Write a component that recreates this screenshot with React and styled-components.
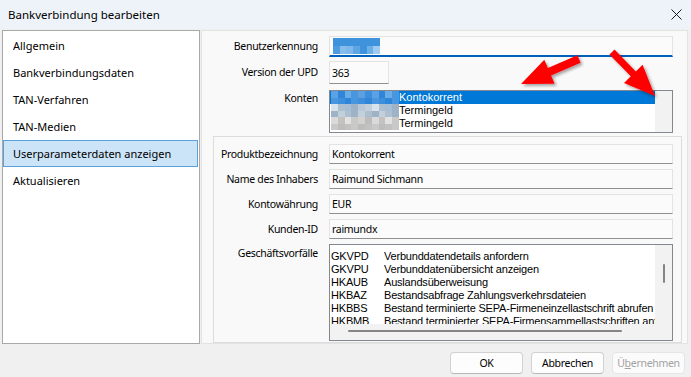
import React from "react";
import styled, { createGlobalStyle } from "styled-components";

const GlobalStyle = createGlobalStyle`
    body {
        margin: 0;
        background: #f0f0f0;
    }
`;

const Window = styled.div`
    width: 691px;
    height: 377px;
    display: flex;
    flex-direction: column;
    position: relative;
    overflow: hidden;
    background: #f0f0f0;
    font-family: "Noto Sans", "Segoe UI", sans-serif;
    font-size: 11px;
    color: #000;
`;

const TitleBar = styled.div`
    height: 29px;
    flex: none;
    display: flex;
    align-items: center;
    justify-content: space-between;
    padding: 0 9px 0 8px;
    background: #eef3f9;
    font-size: 11.5px;
`;

const Body = styled.div`
    height: 315px;
    flex: none;
    display: flex;
    gap: 1px;
    padding: 1px 3px 0 2px;
    box-sizing: border-box;
`;

const Sidebar = styled.div`
    width: 198px;
    box-sizing: border-box;
    background: #fff;
    border: 1px solid #a9a9a9;
    padding-top: 1px;
`;

const NavItem = styled.div`
    height: 27px;
    display: flex;
    align-items: center;
    box-sizing: border-box;
    margin-right: 1px;
    padding-left: 9px;
    background: ${(p) => (p.active ? "#cce4f7" : "transparent")};
    border: 1px solid ${(p) => (p.active ? "#5aa0dc" : "transparent")};
`;

const Panel = styled.div`
    flex: 1;
    box-sizing: border-box;
    background: #f9f9f9;
    border: 1px solid #e3e3e3;
    padding-top: 5px;
    display: flex;
    flex-direction: column;
    font-size: 10.5px;
    letter-spacing: -0.3px;
`;

const Row = styled.div`
    display: flex;
    align-items: ${(p) => (p.top ? "flex-start" : "center")};
    gap: 11px;
    margin-top: ${(p) => p.mt || 0}px;
`;

const Label = styled.div`
    width: ${(p) => p.w}px;
    flex: none;
    text-align: right;
    padding-top: ${(p) => p.pt || 0}px;
    line-height: 15px;
    white-space: nowrap;
`;

const Field = styled.div`
    width: ${(p) => p.w || 344}px;
    height: ${(p) => p.h || 20}px;
    box-sizing: border-box;
    display: flex;
    align-items: center;
    padding-left: 2px;
    background: #fbfbfb;
    border: 1px solid #e3e3e3;
    border-bottom: ${(p) => (p.focus ? "2px solid #005fb8" : "1px solid #8f8f8f")};
    white-space: nowrap;
`;

const Group = styled.div`
    margin: 3px 5px 0 11px;
    height: 208px;
    box-sizing: border-box;
    border: 1px solid #dcdcdc;
    padding-top: 7px;
`;

const ListBox = styled.div`
    width: 344px;
    height: ${(p) => p.h}px;
    box-sizing: border-box;
    border: 1px solid #828790;
    background: #fff;
    display: grid;
    grid-template-columns: 1fr 17px;
    grid-template-rows: ${(p) => (p.hscroll ? "1fr 16px" : "1fr")};
    font-family: "Liberation Sans", Arial, sans-serif;
    font-size: 11px;
    letter-spacing: ${(p) => (p.tight ? "-0.2px" : "0")};
`;

const ListContent = styled.div`
    overflow: hidden;
    padding-top: ${(p) => p.pt || 0}px;
`;

const VScroll = styled.div`
    background: #f2f2f2;
    display: flex;
    justify-content: center;
    align-items: flex-start;
`;

const HScroll = styled.div`
    background: #f2f2f2;
    padding: 6px 0 0 18px;
`;

const Corner = styled.div`
    background: #f2f2f2;
`;

const Thumb = styled.div`
    background: #858585;
    border-radius: 1px;
    width: ${(p) => p.w}px;
    height: ${(p) => p.h}px;
    margin-top: ${(p) => p.mt || 0}px;
`;

const KontoRow = styled.div`
    height: 13px;
    display: flex;
    align-items: center;
    background: ${(p) => (p.selected ? "#0078d7" : "transparent")};
    color: ${(p) => (p.selected ? "#fff" : "#000")};
    line-height: 13px;
`;

const MosaicGrid = styled.div`
    display: grid;
    grid-template-columns: repeat(${(p) => p.cols}, 1fr);
    width: ${(p) => p.w}px;
    height: ${(p) => p.h}px;
    margin-left: ${(p) => p.ml || 0}px;
    flex: none;
`;

const TxRow = styled.div`
    height: 13px;
    line-height: 13px;
    display: flex;
    white-space: nowrap;
    padding-left: 1px;
`;

const TxCode = styled.span`
    width: 53px;
    flex: none;
`;

const Footer = styled.div`
    flex: 1;
    display: flex;
    justify-content: flex-end;
    align-items: flex-start;
    gap: 8px;
    padding: 8px 6px 0 0;
`;

const Button = styled.button`
    width: 73px;
    height: 22px;
    box-sizing: border-box;
    border-radius: 4px;
    font-family: "Noto Sans", "Segoe UI", sans-serif;
    font-size: 10.5px;
    letter-spacing: -0.3px;
    padding: 0;
    background: ${(p) => (p.disabled ? "#fbfbfb" : "#fdfdfd")};
    color: ${(p) => (p.disabled ? "#a2a2a2" : "#000")};
    border: 1px solid ${(p) => (p.disabled ? "#e5e5e5" : "#d1d1d1")};
    border-bottom-color: ${(p) => (p.disabled ? "#e5e5e5" : "#b8b8b8")};
`;

const Overlay = styled.svg`
    position: absolute;
    left: 0;
    top: 0;
    pointer-events: none;
`;

const Mosaic = ({ cols, rows, w, h, palette, seed = 0, ml }) => {
    const cells = [];
    for (let r = 0; r < rows; r++) {
        for (let c = 0; c < cols; c++) {
            const color = palette[(c * 7 + r * 3 + seed + c * r) % palette.length];
            cells.push(<div key={r + "-" + c} style={{ background: color }} />);
        }
    }
    return (
        <MosaicGrid cols={cols} w={w} h={h} ml={ml}>
            {cells}
        </MosaicGrid>
    );
};

const blues = ["#7fb8ea", "#5ea5e3", "#3f93dd", "#6cafe7", "#9ccaf0", "#4d9be0", "#86bdeb"];
const selBlues = ["#3c8fdc", "#5aa2e3", "#2f86d9", "#6aabe5", "#4896df", "#5d9fdf"];
const grayBlues = ["#a7bfd6", "#9fb3c7", "#b8c8d8", "#c2d0dc", "#d7e4ee", "#aebfcf"];
const grays = ["#c9c9c9", "#d4d2d0", "#bdbdbd", "#dadada", "#c4c2c0", "#e2e2e2"];

const arrowPoints = (tx, ty, px, py, sw, hl, hw) => {
    const len = Math.hypot(px - tx, py - ty);
    const dx = (px - tx) / len;
    const dy = (py - ty) / len;
    const nx = -dy;
    const ny = dx;
    const bx = px - dx * hl;
    const by = py - dy * hl;
    const pts = [
        [tx + (nx * sw) / 2, ty + (ny * sw) / 2],
        [bx + (nx * sw) / 2, by + (ny * sw) / 2],
        [bx + (nx * hw) / 2, by + (ny * hw) / 2],
        [px, py],
        [bx - (nx * hw) / 2, by - (ny * hw) / 2],
        [bx - (nx * sw) / 2, by - (ny * sw) / 2],
        [tx - (nx * sw) / 2, ty - (ny * sw) / 2],
    ];
    return pts.map((p) => p[0].toFixed(1) + "," + p[1].toFixed(1)).join(" ");
};

const navItems = [
    "Allgemein",
    "Bankverbindungsdaten",
    "TAN-Verfahren",
    "TAN-Medien",
    "Userparameterdaten anzeigen",
    "Aktualisieren",
];

const transactions = [
    ["GKVPD", "Verbunddatendetails anfordern"],
    ["GKVPU", "Verbunddatenübersicht anzeigen"],
    ["HKAUB", "Auslandsüberweisung"],
    ["HKBAZ", "Bestandsabfrage Zahlungsverkehrsdateien"],
    ["HKBBS", "Bestand terminierte SEPA-Firmeneinzellastschrift abrufen"],
    ["HKBMB", "Bestand terminierter SEPA-Firmensammellastschriften anfordern"],
];

const App = () => {
    return (
        <Window>
            <GlobalStyle />
            <TitleBar>
                <span>Bankverbindung bearbeiten</span>
                <svg width="11" height="11" viewBox="0 0 11 11">
                    <path d="M0.5 0.5 L10.5 10.5 M10.5 0.5 L0.5 10.5" stroke="#1b1b1b" strokeWidth="1" />
                </svg>
            </TitleBar>
            <Body>
                <Sidebar>
                    {navItems.map((item) => (
                        <NavItem key={item} active={item === "Userparameterdaten anzeigen"}>
                            {item}
                        </NavItem>
                    ))}
                </Sidebar>
                <Panel>
                    <Row>
                        <Label w={116}>Benutzerkennung</Label>
                        <Field h={21} focus>
                            <Mosaic cols={7} rows={2} w={47} h={16} palette={blues} seed={2} ml={1} />
                        </Field>
                    </Row>
                    <Row mt={4}>
                        <Label w={116}>Version der UPD</Label>
                        <Field w={60} h={23}>363</Field>
                    </Row>
                    <Row mt={6} top>
                        <Label w={116} pt={1}>Konten</Label>
                        <ListBox h={43}>
                            <ListContent>
                                <KontoRow selected>
                                    <Mosaic cols={10} rows={2} w={68} h={13} palette={selBlues} seed={1} ml={1} />
                                    Kontokorrent
                                </KontoRow>
                                <KontoRow>
                                    <Mosaic cols={10} rows={2} w={68} h={13} palette={grayBlues} seed={4} ml={1} />
                                    Termingeld
                                </KontoRow>
                                <KontoRow>
                                    <Mosaic cols={10} rows={2} w={68} h={13} palette={grays} seed={3} ml={1} />
                                    Termingeld
                                </KontoRow>
                            </ListContent>
                            <VScroll />
                        </ListBox>
                    </Row>
                    <Group>
                        <Row>
                            <Label w={104}>Produktbezeichnung</Label>
                            <Field>Kontokorrent</Field>
                        </Row>
                        <Row mt={5}>
                            <Label w={104}>Name des Inhabers</Label>
                            <Field>Raimund Sichmann</Field>
                        </Row>
                        <Row mt={5}>
                            <Label w={104}>Kontowährung</Label>
                            <Field>EUR</Field>
                        </Row>
                        <Row mt={5}>
                            <Label w={104}>Kunden-ID</Label>
                            <Field>raimundx</Field>
                        </Row>
                        <Row mt={5} top>
                            <Label w={104} pt={2}>Geschäftsvorfälle</Label>
                            <ListBox h={97} hscroll tight>
                                <ListContent pt={5}>
                                    {transactions.map(([code, desc]) => (
                                        <TxRow key={code}>
                                            <TxCode>{code}</TxCode>
                                            {desc}
                                        </TxRow>
                                    ))}
                                </ListContent>
                                <VScroll>
                                    <Thumb w={2} h={19} mt={19} />
                                </VScroll>
                                <HScroll>
                                    <Thumb w={274} h={2} />
                                </HScroll>
                                <Corner />
                            </ListBox>
                        </Row>
                    </Group>
                </Panel>
            </Body>
            <Footer>
                <Button>OK</Button>
                <Button>Abbrechen</Button>
                <Button disabled>
                    Ü<u>b</u>ernehmen
                </Button>
            </Footer>
            <Overlay width="691" height="377">
                <defs>
                    <filter id="shadow" x="-20%" y="-20%" width="150%" height="150%">
                        <feDropShadow dx="2" dy="2" stdDeviation="1.5" floodColor="#000" floodOpacity="0.35" />
                    </filter>
                </defs>
                <polygon points={arrowPoints(579, 59, 521, 84, 8, 31, 26)} fill="#ff0000" filter="url(#shadow)" />
                <polygon points={arrowPoints(612, 52, 655, 96, 7, 31, 26)} fill="#ff0000" filter="url(#shadow)" />
            </Overlay>
        </Window>
    );
};

export default App;
